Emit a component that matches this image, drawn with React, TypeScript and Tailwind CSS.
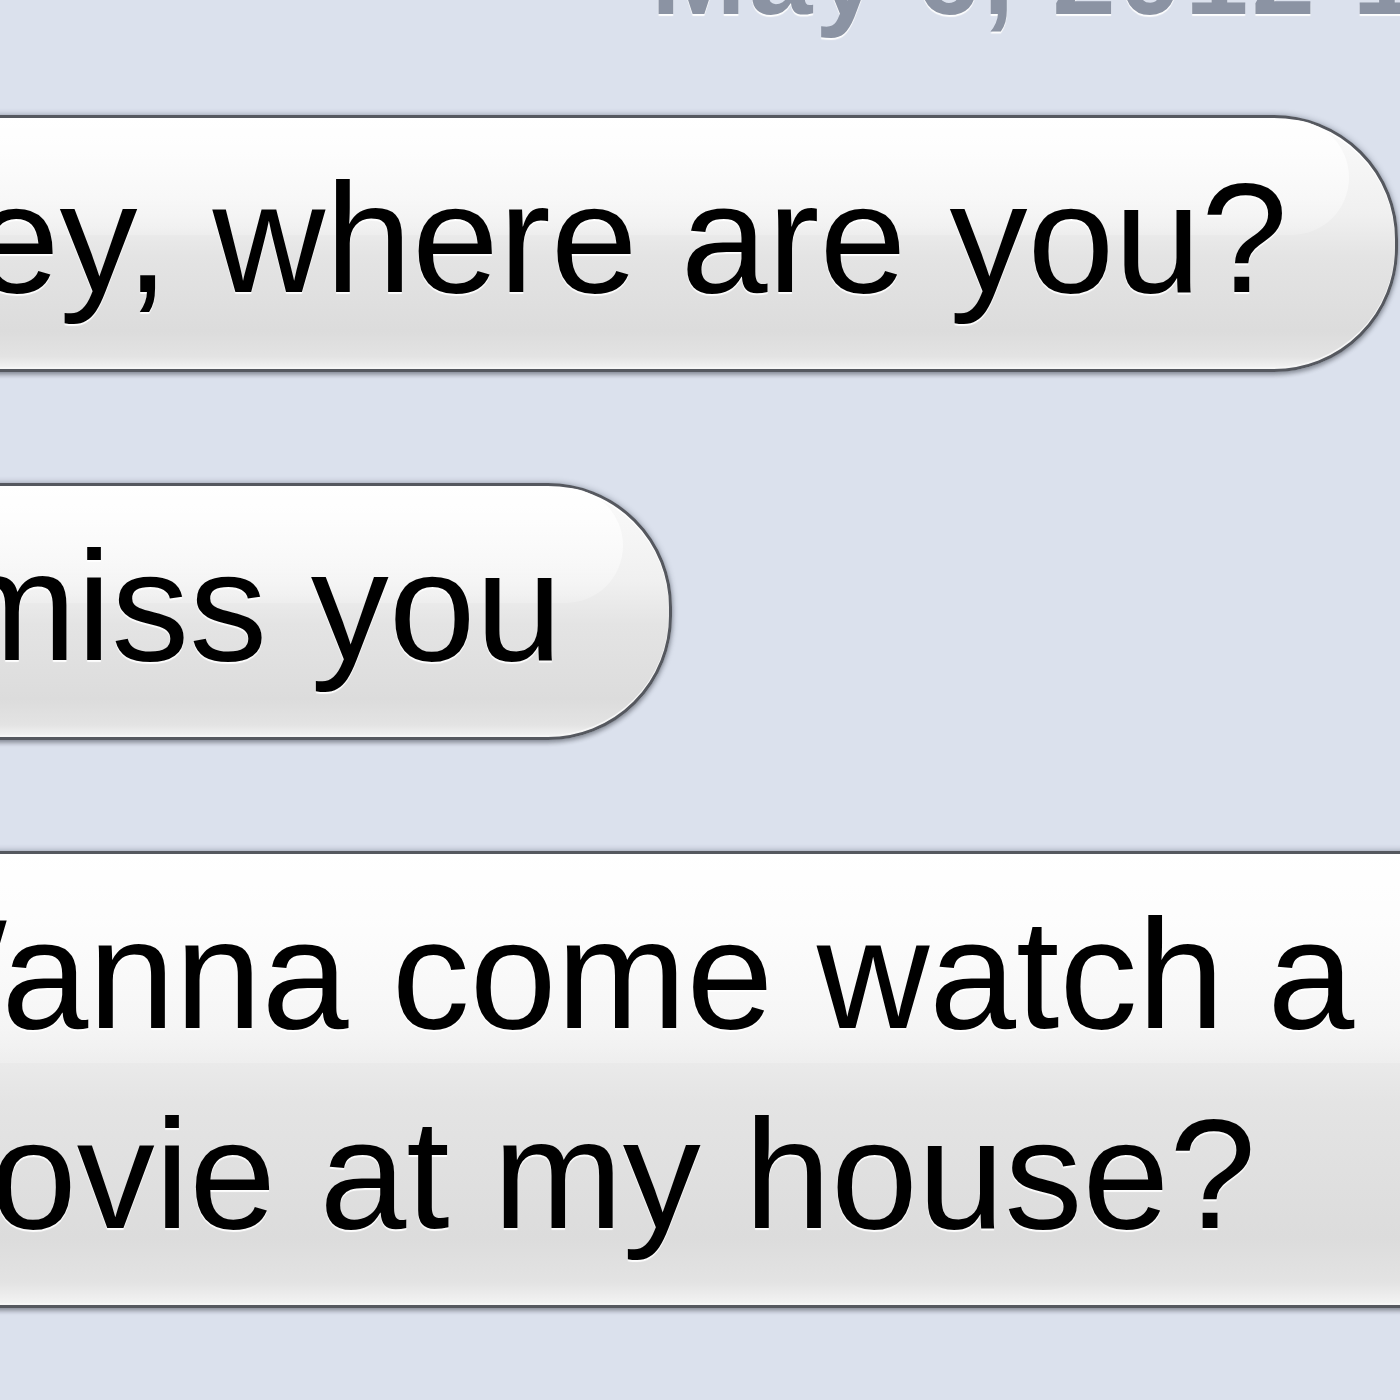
const Bubble = ({ width, lines }: { width: string; lines: string[] }) => {
  return (
    <div
      className={`relative shrink-0 ${width} rounded-r-[124px] border-[3px] border-[#55585f] bg-[linear-gradient(to_bottom,#fbfbfb_0%,#f0f0f0_38%,#e4e4e4_55%,#dcdcdc_85%,#e3e3e3_95%,#f4f4f4_100%)] pl-[157px] pt-[20px] pb-[31px] shadow-[0_0_6px_rgba(40,50,70,0.4),0_3px_4px_rgba(0,0,0,0.25),inset_0_2px_0_#ffffff,inset_0_-2px_0_#f6f6f6]`}
    >
      <div className="pointer-events-none absolute top-[2px] left-0 right-[46px] h-[46%] rounded-r-full bg-[linear-gradient(to_bottom,rgba(255,255,255,0.95),rgba(255,255,255,0.2))]" />
      <div className="relative text-[156px] leading-[200px] text-black whitespace-nowrap [text-shadow:0_2px_1px_rgba(255,255,255,0.95)]">
        {lines.map((l) => (
          <div key={l}>{l}</div>
        ))}
      </div>
    </div>
  );
};

export default function App() {
  return (
    <div className="relative h-[1400px] w-[1400px] overflow-hidden bg-[#dbe1ed] font-['Liberation_Sans',Arial,Helvetica,sans-serif]">
      <div className="-mt-[82px] pl-[651px] text-[114px] leading-none font-bold tracking-[3px] text-[#8b93a3] whitespace-nowrap [text-shadow:0_2px_1px_rgba(255,255,255,0.95)]">
        May 6, 2012 1:37 PM
      </div>

      <div className="mt-[83px] -ml-[300px] flex flex-col gap-[111px]">
        <Bubble width="w-[1698px]" lines={["Hey, where are you?"]} />
        <Bubble width="w-[972px]" lines={["I miss you"]} />
        <Bubble width="w-[1900px]" lines={["Wanna come watch a", "movie at my house?"]} />
      </div>
    </div>
  );
}
